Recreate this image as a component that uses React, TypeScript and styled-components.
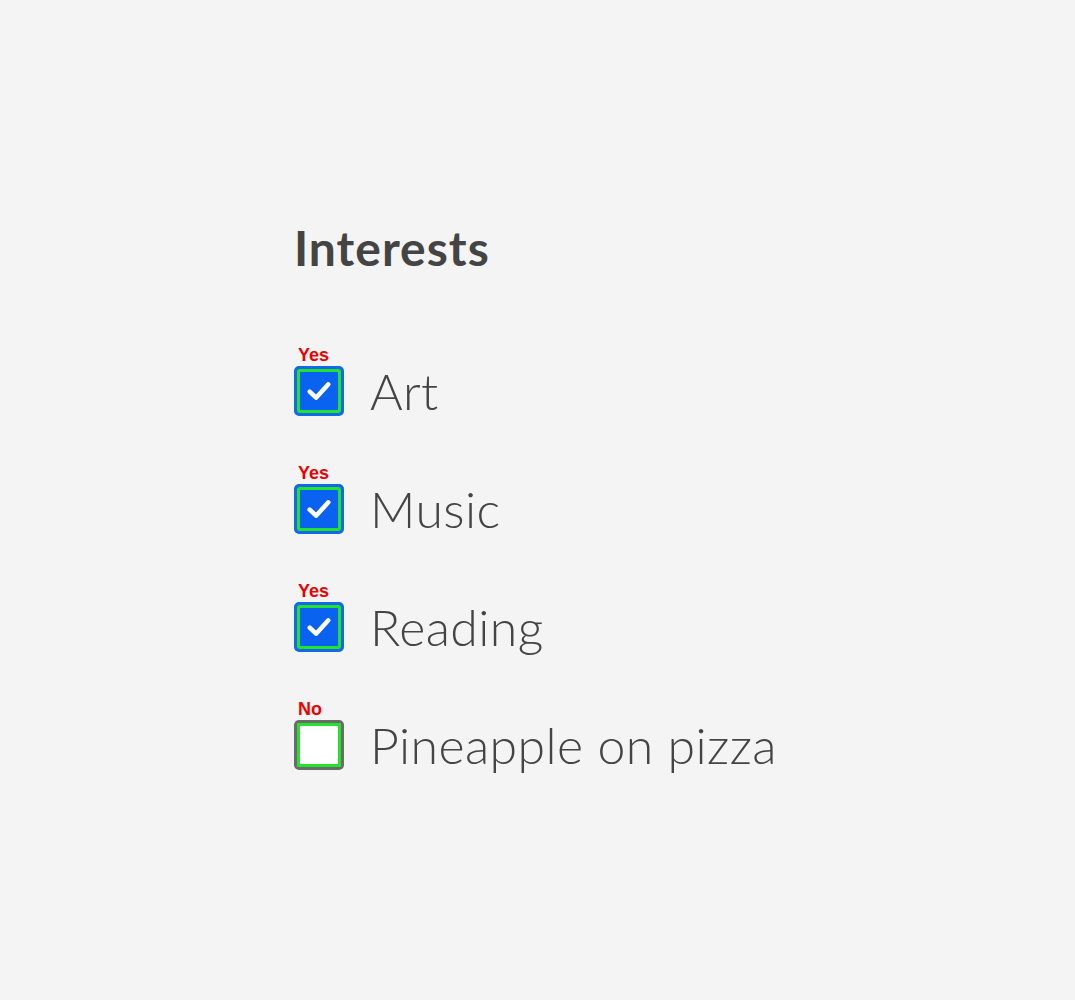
import React from "react";
import styled, { createGlobalStyle } from "styled-components";

const Global = createGlobalStyle`
  html, body { margin: 0; padding: 0; background: #f4f4f4; }
  body { font-family: Lato, "Noto Sans", sans-serif; }
`;

const Page = styled.div`
  min-height: 1000px;
  box-sizing: border-box;
  padding: 218px 0 0 294px;
`;

const Title = styled.h2`
  margin: 0 0 67px;
  font-family: Lato, sans-serif;
  font-weight: 700;
  font-size: 48px;
  letter-spacing: 1px;
  line-height: 60px;
  color: #444;
`;

const List = styled.div`
  display: flex;
  flex-direction: column;
  gap: 47px;
`;

const Row = styled.label`
  display: flex;
  align-items: flex-end;
  gap: 26px;
  cursor: pointer;
`;

const BoxCol = styled.div`
  display: flex;
  flex-direction: column;
  align-items: flex-start;
`;

const State = styled.span`
  font-family: "Liberation Sans", Arial, sans-serif;
  font-weight: 700;
  font-size: 18px;
  line-height: 18px;
  color: #ee0000;
  margin: 1px 0 2px 4px;
`;

const Box = styled.span<{ $checked: boolean }>`
  box-sizing: border-box;
  width: 50px;
  height: 50px;
  border-radius: 5px;
  border: 3px solid ${(p) => (p.$checked ? "#1467ef" : "#6b6b6b")};
  background: ${(p) => (p.$checked ? "#0a63f0" : "#ffffff")};
  box-shadow: inset 0 0 0 3px #22e22a;
  display: flex;
  align-items: center;
  justify-content: center;
`;

const Text = styled.span`
  font-family: Lato, sans-serif;
  font-weight: 300;
  font-size: 50px;
  letter-spacing: 0.4px;
  line-height: 50px;
  color: #444;
`;

const Check = () => (
  <svg width="32" height="32" viewBox="0 0 24 24" fill="none">
    <path
      d="M5 12.5 L9.8 17 L19 7"
      stroke="#fff"
      strokeWidth="3.4"
      strokeLinecap="round"
      strokeLinejoin="round"
    />
  </svg>
);

const items = [
  { label: "Art", checked: true },
  { label: "Music", checked: true },
  { label: "Reading", checked: true },
  { label: "Pineapple on pizza", checked: false },
];

export default function App() {
  return (
    <>
      <Global />
      <Page>
        <Title>Interests</Title>
        <List>
          {items.map((it) => (
            <Row key={it.label}>
              <BoxCol>
                <State>{it.checked ? "Yes" : "No"}</State>
                <Box $checked={it.checked}>{it.checked && <Check />}</Box>
              </BoxCol>
              <Text>{it.label}</Text>
            </Row>
          ))}
        </List>
      </Page>
    </>
  );
}
